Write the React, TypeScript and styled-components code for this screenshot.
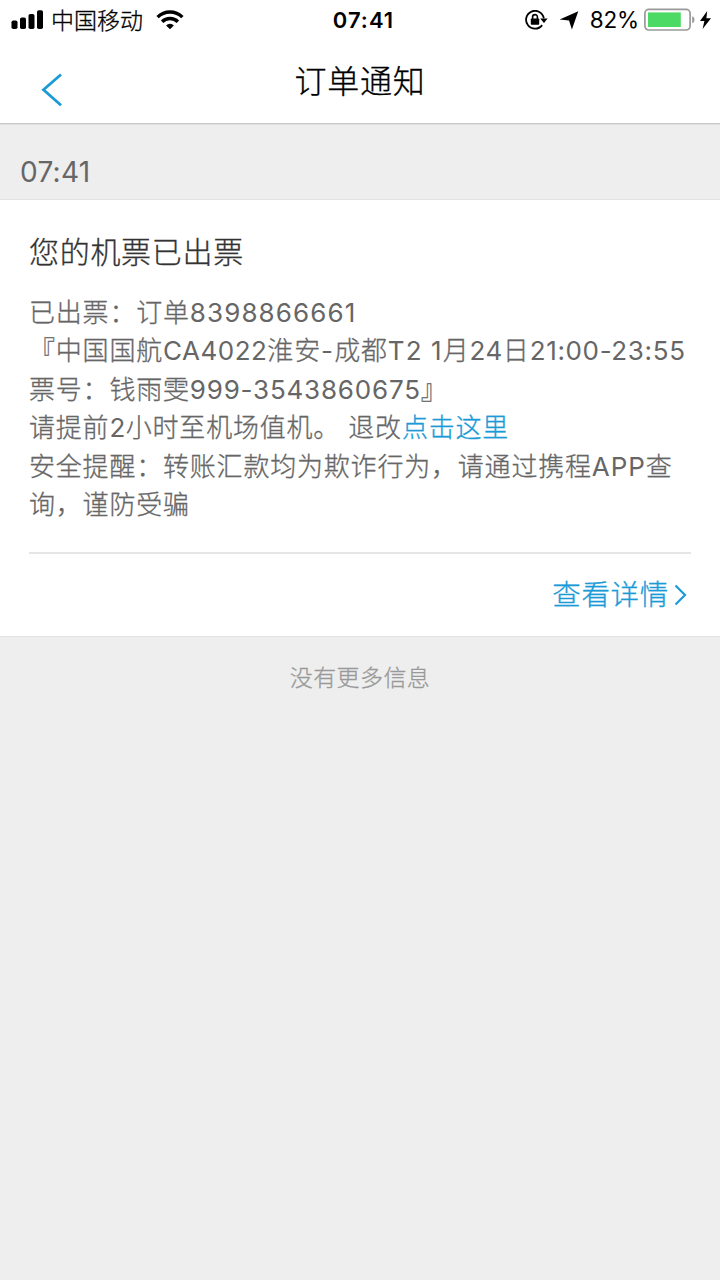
import React from "react";
import styled, { createGlobalStyle, css } from "styled-components";

const BLUE = "#1a9bd7";

const GlobalStyle = createGlobalStyle`
  * { box-sizing: border-box; }
  html, body { margin: 0; padding: 0; background: #eeeeee; }
  body { font-family: Inter, "Noto Sans CJK SC", sans-serif; }
`;

const hanziWeight = css`
  font-weight: 300;
  -webkit-text-stroke: 0.3px currentColor;
`;

const Screen = styled.div`
  width: 720px;
  min-height: 1280px;
  background: #eeeeee;
  display: flex;
  flex-direction: column;
`;

const StatusBar = styled.div`
  height: 40px;
  background: #fff;
  color: #000;
  display: grid;
  grid-template-columns: 1fr auto 1fr;
  padding: 0 9px 0 11px;
  line-height: 40px;
  font-size: 23px;
`;

const StatusGroup = styled.div<{ $end?: boolean }>`
  display: flex;
  height: 40px;
  align-items: center;
  justify-content: ${(p) => (p.$end ? "flex-end" : "flex-start")};
  svg { display: block; flex: none; }
`;

const Carrier = styled.span`
  margin: 0 13px 0 7px;
  padding-top: 2px;
  line-height: 38px;
  ${hanziWeight}
`;

const Clock = styled.div`
  font-weight: 600;
  font-size: 22px;
  letter-spacing: 1px;
  padding-left: 5px;
`;

const Percent = styled.span`
  font-size: 22.5px;
  letter-spacing: -0.2px;
  margin: 0 5px 0 11px;
`;

const Spacer = styled.span<{ $w: number }>`
  width: ${(p) => p.$w}px;
`;

const NavBar = styled.header`
  height: 85px;
  background: #fff;
  border-bottom: 1px solid #dedede;
  box-shadow: inset 0 -1px #c9c9c9;
  display: grid;
  grid-template-columns: 120px 1fr 120px;
`;

const BackButton = styled.button`
  border: 0;
  background: none;
  padding: 33px 0 0 41px;
  display: flex;
  align-items: flex-start;
  svg { display: block; }
`;

const NavTitle = styled.h1`
  margin: 0;
  font-size: 32px;
  ${hanziWeight}
  letter-spacing: 0.8px;
  line-height: 84px;
  text-align: center;
  color: #000;
`;

const TimeLabel = styled.div`
  height: 74px;
  padding: 27px 20px 0;
  line-height: 40px;
  font-size: 28px;
  letter-spacing: 0.3px;
  color: #666;
`;

const Card = styled.section`
  height: 438px;
  background: #fff;
  border-top: 1px solid #e2e2e2;
  border-bottom: 1px solid #e2e2e2;
  padding: 31px 29px 0;
  display: flex;
  flex-direction: column;
`;

const CardTitle = styled.h2`
  margin: 0;
  font-size: 30px;
  ${hanziWeight}
  line-height: 42px;
  letter-spacing: 0.7px;
  color: #333;
`;

const Message = styled.div`
  margin-top: 21px;
  color: #666;
  font-size: 26px;
  ${hanziWeight}
`;

const Line = styled.p`
  margin: 0;
  line-height: 38.4px;
  letter-spacing: 0.8px;
  white-space: pre;
`;

const Num = styled.span<{ $track?: number }>`
  letter-spacing: ${(p) => p.$track ?? 0.5}px;
  font-weight: 400;
  -webkit-text-stroke: 0;
`;

const InlineLink = styled.a`
  color: ${BLUE};
`;

const CardFooter = styled.div`
  margin-top: 28px;
  border-top: 2px solid #e6e6e6;
  height: 85px;
  display: flex;
  align-items: center;
  justify-content: flex-end;
  padding-right: 4px;
`;

const DetailLink = styled.a`
  display: flex;
  align-items: center;
  gap: 5px;
  color: ${BLUE};
  font-size: 28.5px;
  ${hanziWeight}
  letter-spacing: 0.7px;
  line-height: 44px;
  svg { display: block; }
`;

const EndNote = styled.div`
  margin-top: 20px;
  line-height: 42px;
  font-size: 23px;
  ${hanziWeight}
  letter-spacing: 0.4px;
  text-align: center;
  color: #999;
`;

const SignalIcon = () => (
  <svg width="33" height="20" viewBox="0 0 33 20">
    <rect x="0.5" y="10.5" width="6" height="8.5" rx="1.8" />
    <rect x="9" y="7.5" width="6" height="11.5" rx="1.8" />
    <rect x="17.5" y="4" width="6" height="15" rx="1.8" />
    <rect x="26" y="0.3" width="6" height="18.7" rx="1.8" />
  </svg>
);

const WifiIcon = () => (
  <svg width="28" height="20" viewBox="0 0 28 20" fill="none" stroke="#000" strokeWidth="3.4">
    <path d="M1.6 7.1a17.6 17.6 0 0 1 24.8 0" />
    <path d="M6.1 11.8a11.2 11.2 0 0 1 15.8 0" />
    <path d="M14 19.2l-3.9-3.8a5.6 5.6 0 0 1 7.8 0z" fill="#000" stroke="none" />
  </svg>
);

const RotationLockIcon = () => (
  <svg width="23" height="20" viewBox="0 0 23 20">
    <path d="M17.1 15.1A8.9 8.9 0 1 1 18.8 8.4" fill="none" stroke="#000" strokeWidth="1.8" />
    <path d="M15.2 8.4h7.4l-3.6 4.6z" />
    <rect x="5.8" y="8.6" width="8.4" height="6.2" rx="0.7" />
    <path d="M7.6 9V7a2.4 2.4 0 0 1 4.8 0V9" fill="none" stroke="#000" strokeWidth="1.6" />
  </svg>
);

const LocationIcon = () => (
  <svg width="20" height="19" viewBox="0 0 20 19">
    <path d="M19.3 0.3L0.6 8.4l9.4 1.2 2.9 9z" />
  </svg>
);

const BatteryIcon = () => (
  <svg width="52" height="24" viewBox="0 0 52 24">
    <rect x="0.9" y="1.4" width="45.2" height="20.6" rx="4" fill="#fff" stroke="#999" strokeWidth="1.7" />
    <rect x="4" y="4.4" width="32.8" height="14.6" fill="#4cd964" />
    <path d="M48.2 8.2c3 0.8 3 6.2 0 7z" fill="#999" />
  </svg>
);

const BoltIcon = () => (
  <svg width="11" height="18" viewBox="0 0 11 18">
    <path d="M7.2 0L0 10h4.4L2.6 18 11 7.2H6.4z" />
  </svg>
);

export default function App() {
  return (
    <>
      <GlobalStyle />
      <Screen>
        <StatusBar>
          <StatusGroup>
            <SignalIcon />
            <Carrier>中国移动</Carrier>
            <WifiIcon />
          </StatusGroup>
          <Clock>07:41</Clock>
          <StatusGroup $end>
            <RotationLockIcon />
            <Spacer $w={11} />
            <LocationIcon />
            <Percent>82%</Percent>
            <BatteryIcon />
            <Spacer $w={4} />
            <BoltIcon />
          </StatusGroup>
        </StatusBar>
        <NavBar>
          <BackButton aria-label="返回">
            <svg width="22" height="34" viewBox="0 0 22 34" fill="none" stroke={BLUE} strokeWidth="2.8">
              <path d="M20 1.5L2.5 16.8 20 32.2" />
            </svg>
          </BackButton>
          <NavTitle>订单通知</NavTitle>
        </NavBar>
        <TimeLabel>07:41</TimeLabel>
        <Card>
          <CardTitle>您的机票已出票</CardTitle>
          <Message>
            <Line>已出票：订单<Num $track={1.1}>8398866661</Num></Line>
            <Line>『中国国航<Num>CA4022</Num>淮安<Num $track={1.3}>-</Num>成都<Num $track={1.1}>T2 1</Num>月<Num>24</Num>日<Num $track={0.65}>21:00-23:55</Num></Line>
            <Line>票号：钱雨雯<Num $track={0.8}>999-3543860675</Num>』</Line>
            <Line>请提前<Num>2</Num>小时至机场值机。 退改<InlineLink>点击这里</InlineLink></Line>
            <Line>安全提醒：转账汇款均为欺诈行为，请通过携程<Num $track={0.9}>APP</Num>查</Line>
            <Line>询，谨防受骗</Line>
          </Message>
          <CardFooter>
            <DetailLink>
              查看详情
              <svg width="13" height="22" viewBox="0 0 13 22" fill="none" stroke={BLUE} strokeWidth="2.2">
                <path d="M1.5 1.5L11 11 1.5 20.5" />
              </svg>
            </DetailLink>
          </CardFooter>
        </Card>
        <EndNote>没有更多信息</EndNote>
      </Screen>
    </>
  );
}
